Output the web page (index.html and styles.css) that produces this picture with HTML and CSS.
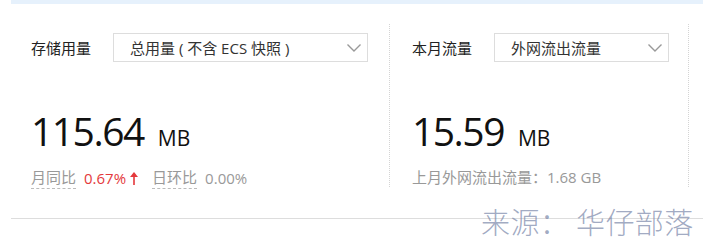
FILE: index.html
```html
<!DOCTYPE html>
<html lang="zh-CN">
<head>
    <meta charset="UTF-8">
    <meta name="viewport" content="width=device-width, initial-scale=1.0">
    <title>用量概览</title>
    <link rel="stylesheet" href="styles.css">
</head>
<body>
    <div class="topbar"></div>
    <div class="overview">
        <div class="panel storage">
            <div class="panel-head">
                <span class="label">存储用量</span>
                <div class="select wide">
                    <span>总用量 ( 不含 ECS 快照 )</span>
                    <svg class="chevron" width="14" height="8" viewBox="0 0 14 8"><polyline points="0.5,0.5 7,7 13.5,0.5" fill="none" stroke="#999" stroke-width="1.4"/></svg>
                </div>
            </div>
            <div class="amount">115.64<span class="unit">MB</span></div>
            <div class="compare">
                <span class="tip">月同比</span>
                <span class="up">0.67%</span>
                <svg class="arrow" width="8" height="13" viewBox="0 0 8 13"><polygon points="4,0 8,5 0,5" fill="#e4393c"/><rect x="3.2" y="4" width="1.6" height="9" fill="#e4393c"/></svg>
                <span class="tip gap">日环比</span>
                <span class="flat">0.00%</span>
            </div>
        </div>
        <div class="panel traffic">
            <div class="panel-head">
                <span class="label">本月流量</span>
                <div class="select narrow">
                    <span>外网流出流量</span>
                    <svg class="chevron" width="14" height="8" viewBox="0 0 14 8"><polyline points="0.5,0.5 7,7 13.5,0.5" fill="none" stroke="#999" stroke-width="1.4"/></svg>
                </div>
            </div>
            <div class="amount">15.59<span class="unit">MB</span></div>
            <div class="compare">
                <span class="flat">上月外网流出流量：1.68 GB</span>
            </div>
        </div>
    </div>
    <div class="watermark">来源： 华仔部落</div>
</body>
</html>
```

FILE: styles.css
```css
body {
    margin: 0;
    background: #fff;
    font-family: 'Open Sans', 'Noto Sans CJK SC', sans-serif;
    font-size: 15px;
    color: #333;
    position: relative;
    height: 240px;
    overflow: hidden;
}

.topbar {
    margin-left: 11px;
    height: 4px;
    background: #e6f1fc;
}

.overview {
    margin: 20px 0 0 11px;
    display: flex;
    padding-bottom: 31px;
    border-bottom: 1px solid #ddd;
}

.panel {
    height: 163px;
    box-sizing: border-box;
    padding-top: 9px;
}

.storage {
    width: 378px;
    padding-left: 20px;
}

.traffic {
    width: 300px;
    padding-left: 22px;
    border-left: 1px dotted #d4d4d4;
    border-right: 1px dotted #d4d4d4;
}

.panel-head {
    display: flex;
    align-items: center;
}

.label {
    width: 82px;
    flex-shrink: 0;
    color: #222;
}

.select {
    height: 29px;
    box-sizing: border-box;
    border: 1px solid #ddd;
    display: flex;
    align-items: center;
    justify-content: space-between;
    padding: 0 6px 0 16px;
}

.select.wide {
    width: 255px;
}

.select.narrow {
    width: 175px;
}

.amount {
    margin-top: 46px;
    font-family: 'Open Sans', sans-serif;
    font-size: 39px;
    line-height: 46px;
    color: #111;
    letter-spacing: -1.5px;
}

.unit {
    font-size: 21px;
    margin-left: 14px;
    letter-spacing: 0;
}

.compare {
    margin-top: 6px;
    display: flex;
    align-items: center;
    color: #999;
    line-height: 21px;
}

.tip {
    border-bottom: 1px dashed #bbb;
}

.gap {
    margin-left: 14px;
}

.up {
    color: #e4393c;
    margin-left: 8px;
}

.arrow {
    margin-left: 4px;
}

.flat {
    margin-left: 8px;
}

.traffic .flat {
    margin-left: 0;
}

/* watermark stamped over the bottom right corner */
.watermark {
    position: absolute;
    left: 481px;
    top: 204px;
    font-family: 'Noto Sans CJK SC', sans-serif;
    font-size: 29px;
    font-weight: 300;
    line-height: 34px;
    letter-spacing: 0.4px;
    color: rgba(120, 133, 168, 0.7);
    white-space: nowrap;
}
```
